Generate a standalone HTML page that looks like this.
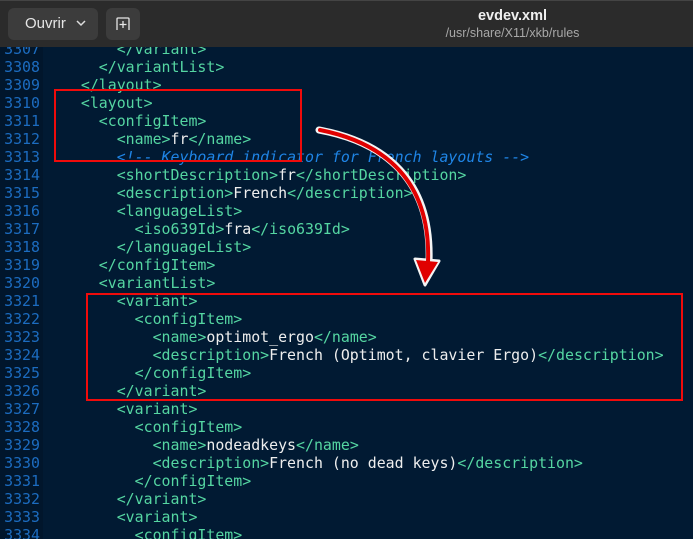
<!DOCTYPE html>
<html><head><meta charset="utf-8"><style>
*{margin:0;padding:0}
html,body{width:693px;height:539px;overflow:hidden}
body{background:#011a33;position:relative;font-family:"DejaVu Sans Mono",monospace}
#gut{position:absolute;left:0;top:0;width:43px;height:539px;background:#01162c}
.l{position:absolute;left:0;height:18px;line-height:18px;font-size:14.9px;white-space:pre}
.n{position:absolute;left:0;width:40px;text-align:right;color:#1c6cc0}
.c{position:absolute;left:45px;color:#55d6a2}
.w{color:#eeeeee}
.cm{color:#1f85e6;font-style:italic}
#hdr{position:absolute;left:0;top:0;width:693px;height:47px;background:#2b2b2b;border-top:1px solid #444;box-sizing:border-box;font-family:"Liberation Sans",sans-serif}
.btn{position:absolute;background:#3c3c3c;border-radius:6px}
.box{position:absolute;border:2px solid #f00b0b}
</style></head><body>
<div id="gut"></div>
<div class="l" style="top:40px"><span class="n">3307</span><span class="c">        &lt;/variant&gt;</span></div>
<div class="l" style="top:58px"><span class="n">3308</span><span class="c">      &lt;/variantList&gt;</span></div>
<div class="l" style="top:76px"><span class="n">3309</span><span class="c">    &lt;/layout&gt;</span></div>
<div class="l" style="top:94px"><span class="n">3310</span><span class="c">    &lt;layout&gt;</span></div>
<div class="l" style="top:112px"><span class="n">3311</span><span class="c">      &lt;configItem&gt;</span></div>
<div class="l" style="top:130px"><span class="n">3312</span><span class="c">        &lt;name&gt;<span class="w">fr</span>&lt;/name&gt;</span></div>
<div class="l" style="top:148px"><span class="n">3313</span><span class="c">        <span class="cm">&lt;!-- Keyboard indicator for French layouts --&gt;</span></span></div>
<div class="l" style="top:166px"><span class="n">3314</span><span class="c">        &lt;shortDescription&gt;<span class="w">fr</span>&lt;/shortDescription&gt;</span></div>
<div class="l" style="top:184px"><span class="n">3315</span><span class="c">        &lt;description&gt;<span class="w">French</span>&lt;/description&gt;</span></div>
<div class="l" style="top:202px"><span class="n">3316</span><span class="c">        &lt;languageList&gt;</span></div>
<div class="l" style="top:220px"><span class="n">3317</span><span class="c">          &lt;iso639Id&gt;<span class="w">fra</span>&lt;/iso639Id&gt;</span></div>
<div class="l" style="top:238px"><span class="n">3318</span><span class="c">        &lt;/languageList&gt;</span></div>
<div class="l" style="top:256px"><span class="n">3319</span><span class="c">      &lt;/configItem&gt;</span></div>
<div class="l" style="top:274px"><span class="n">3320</span><span class="c">      &lt;variantList&gt;</span></div>
<div class="l" style="top:292px"><span class="n">3321</span><span class="c">        &lt;variant&gt;</span></div>
<div class="l" style="top:310px"><span class="n">3322</span><span class="c">          &lt;configItem&gt;</span></div>
<div class="l" style="top:328px"><span class="n">3323</span><span class="c">            &lt;name&gt;<span class="w">optimot_ergo</span>&lt;/name&gt;</span></div>
<div class="l" style="top:346px"><span class="n">3324</span><span class="c">            &lt;description&gt;<span class="w">French (Optimot, clavier Ergo)</span>&lt;/description&gt;</span></div>
<div class="l" style="top:364px"><span class="n">3325</span><span class="c">          &lt;/configItem&gt;</span></div>
<div class="l" style="top:382px"><span class="n">3326</span><span class="c">        &lt;/variant&gt;</span></div>
<div class="l" style="top:400px"><span class="n">3327</span><span class="c">        &lt;variant&gt;</span></div>
<div class="l" style="top:418px"><span class="n">3328</span><span class="c">          &lt;configItem&gt;</span></div>
<div class="l" style="top:436px"><span class="n">3329</span><span class="c">            &lt;name&gt;<span class="w">nodeadkeys</span>&lt;/name&gt;</span></div>
<div class="l" style="top:454px"><span class="n">3330</span><span class="c">            &lt;description&gt;<span class="w">French (no dead keys)</span>&lt;/description&gt;</span></div>
<div class="l" style="top:472px"><span class="n">3331</span><span class="c">          &lt;/configItem&gt;</span></div>
<div class="l" style="top:490px"><span class="n">3332</span><span class="c">        &lt;/variant&gt;</span></div>
<div class="l" style="top:508px"><span class="n">3333</span><span class="c">        &lt;variant&gt;</span></div>
<div class="l" style="top:526px"><span class="n">3334</span><span class="c">          &lt;configItem&gt;</span></div>

<div id="hdr">
  <div class="btn" style="left:8px;top:7px;width:90px;height:32px"></div>
  <div style="position:absolute;left:25px;top:14px;font-size:15px;color:#e6e6e6">Ouvrir</div>
  <svg style="position:absolute;left:76px;top:18px" width="10" height="8"><path d="M1 2 L5 6 L9 2" stroke="#ddd" stroke-width="1.5" fill="none"/></svg>
  <div class="btn" style="left:106px;top:7px;width:34px;height:32px"></div>
  <svg style="position:absolute;left:115px;top:15px" width="16" height="16"><path d="M2 14 V3 Q2 2 3 2 H13 Q14 2 14 3 V14" stroke="#e6e6e6" stroke-width="1.3" fill="none"/><path d="M8 5 V12 M4.5 8.5 H11.5" stroke="#e6e6e6" stroke-width="1.3"/></svg>
  <div style="position:absolute;left:380px;width:265px;top:7px;text-align:center;font-size:14.5px;font-weight:bold;color:#f0f0f0">evdev.xml</div>
  <div style="position:absolute;left:380px;width:265px;top:25px;text-align:center;font-size:12.5px;color:#a8a8a8">/usr/share/X11/xkb/rules</div>
</div>

<div class="box" style="left:54px;top:89px;width:244px;height:69px"></div>
<div class="box" style="left:86px;top:293px;width:593px;height:104px"></div>

<svg style="position:absolute;left:0;top:0" width="693" height="539">
  <path d="M319 130 C385 142 432 180 429 262" stroke="#f4f4f4" stroke-width="7" fill="none" stroke-linecap="round"/>
  <path d="M415 259 L439 261 L425 285 Z" fill="#f4f4f4" stroke="#f4f4f4" stroke-width="3" stroke-linejoin="round"/>
  <path d="M320 130 C385 143 431 181 428 262" stroke="#e00000" stroke-width="4" fill="none" stroke-linecap="round"/>
  <path d="M416 260 L438 262 L425 283 Z" fill="#e00000"/>
</svg>
</body></html>
